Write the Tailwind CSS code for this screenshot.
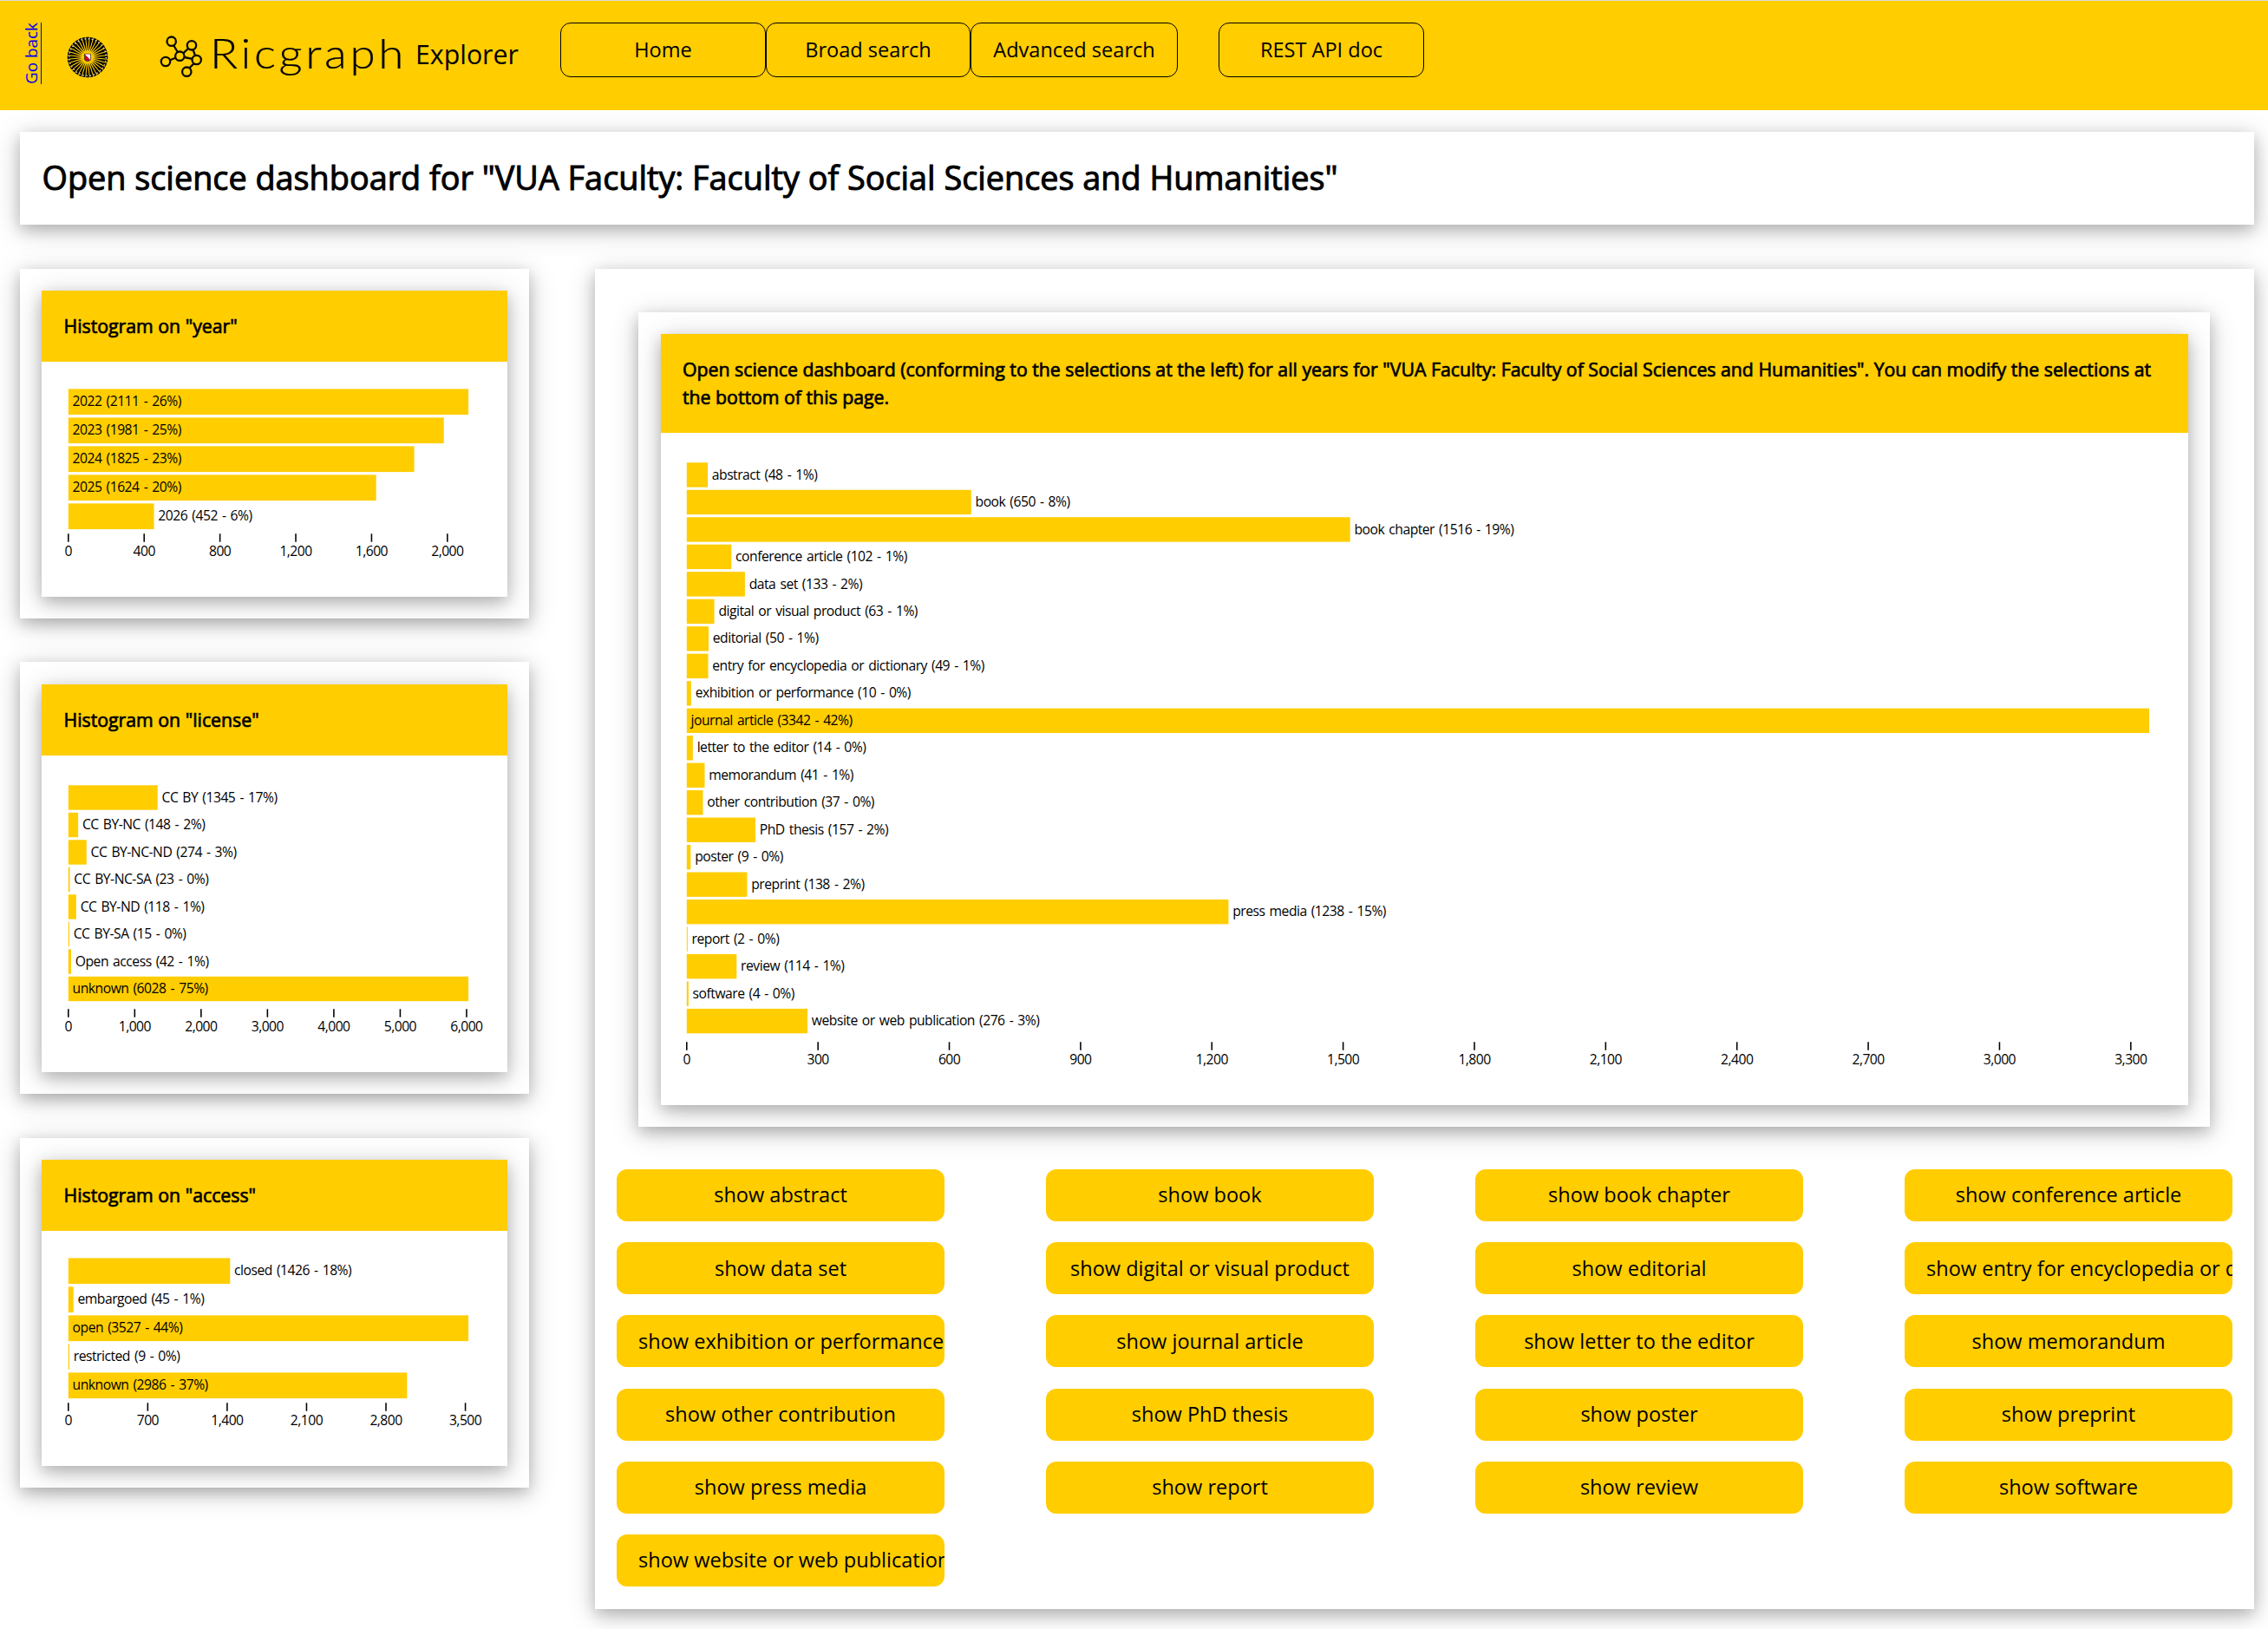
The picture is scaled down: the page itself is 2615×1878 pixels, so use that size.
<!DOCTYPE html>
<html lang="en">
<head>
  <meta charset="UTF-8" />
  <meta name="viewport" content="width=device-width, initial-scale=1.0" />
  <title>Ricgraph Explorer</title>
  <script src="https://cdn.jsdelivr.net/npm/@tailwindcss/browser@4"></script>
</head>
<body class="h-screen overflow-hidden bg-white text-black font-['Open_Sans',sans-serif] text-[23.55px] leading-[35px]">
  <!-- Header -->
  <header class="flex items-start h-[127px] border-t border-[#dcdcdc] bg-[#ffcd00]">
    <a href="#" class="[writing-mode:vertical-rl] rotate-180 ml-[22px] mt-[25px] w-[28px] text-[18.9px] leading-[28px] text-[#0000ee] underline underline-offset-1 decoration-1">Go back</a>
    <svg id="sun" class="ml-[27px] mt-[41px] w-[48px] h-[48px] shrink-0" viewBox="-24 -24 48 48">
      <g id="rays"></g>
      <circle r="21.3" fill="none" stroke="#e0e0e0" stroke-width="1.5" stroke-dasharray="1.4 2.78" />
      <path d="M-3.6-3.8h7.2v6.4q0 1.4-3.6 2q-3.6-.6-3.6-2z" fill="#c00a35" stroke="#4a3a20" stroke-width=".9" />
      <path d="M-3.2-3.4h6.4v6.400z" fill="#fff" />
    </svg>
    <svg class="ml-[59px] mt-[40px] w-[50px] h-[50px] shrink-0" viewBox="184 41 50 50" fill="none" stroke="#0a0a00" stroke-width="2.3">
      <path d="M200.300 52.500L204.800 60M211.500 61.200L217 56M202.300 66.800L196 69.200M212.600 66L221.500 67.800M222.600 57.300L225 64M223.400 73.400L218.500 78.300" />
      <circle cx="197.700" cy="47.700" r="5.200" />
      <circle cx="221" cy="52.300" r="5.200" />
      <circle cx="207.300" cy="64.700" r="5.200" />
      <circle cx="191" cy="71" r="5.200" />
      <circle cx="226.700" cy="69" r="5.200" />
      <circle cx="215.300" cy="82.700" r="5.200" />
    </svg>
    <span class="ml-[8px] mt-[30px] w-[237px] whitespace-nowrap font-['Lato'] font-light text-[46.5px] leading-[60px] tracking-[3.2px] origin-left scale-x-[1.14] [-webkit-text-stroke:0.2px_black]">Ricgraph</span>
    <span class="w-[167px] mt-[39px] text-[30.3px] leading-[45px]">Explorer</span>
    <nav class="flex mt-[25px] text-center">
      <a class="w-[237px] h-[63px] pt-[13px] border border-black rounded-[12px]">Home</a>
      <a class="w-[236px] h-[63px] pt-[13px] border border-black rounded-[12px]">Broad search</a>
      <a class="w-[239px] h-[63px] pt-[13px] border border-black rounded-[12px]">Advanced search</a>
      <a class="ml-[47px] w-[237px] h-[63px] pt-[13px] border border-black rounded-[12px]">REST API doc</a>
    </nav>
  </header>

  <main class="pl-[23px] pr-[16px] pt-[25px]">
    <div class="h-[107px] pl-[25.5px] pt-[25px] bg-white shadow-[0_6px_16px_rgba(0,0,0,0.2),0_6px_31px_rgba(0,0,0,0.19)]">
      <h1 class="text-[37.8px] leading-[56px] [-webkit-text-stroke:1px_black]">Open science dashboard for "VUA Faculty: Faculty of Social Sciences and Humanities"</h1>
    </div>

    <div class="flex mt-[51px] gap-[76px]">
      <!-- Histograms -->
      <div class="flex flex-col w-[587px] shrink-0">
        <section class="h-[403px] p-[25px] bg-white shadow-[0_6px_16px_rgba(0,0,0,0.2),0_6px_31px_rgba(0,0,0,0.19)]">
          <div class="h-[353px] bg-white shadow-[0_6px_16px_rgba(0,0,0,0.2),0_6px_31px_rgba(0,0,0,0.19)]">
            <h2 class="h-[82px] px-[25.5px] pt-[25px] bg-[#ffcd00] text-[21.27px] leading-[32px] [-webkit-text-stroke:0.7px_black]">Histogram on "year"</h2>
            <svg id="year" class="w-full h-[271px]"></svg>
          </div>
        </section>
        <section class="h-[498px] mt-[50px] p-[25px] pt-[26px] bg-white shadow-[0_6px_16px_rgba(0,0,0,0.2),0_6px_31px_rgba(0,0,0,0.19)]">
          <div class="h-[447px] bg-white shadow-[0_6px_16px_rgba(0,0,0,0.2),0_6px_31px_rgba(0,0,0,0.19)]">
            <h2 class="h-[82px] px-[25.5px] pt-[25px] bg-[#ffcd00] text-[21.27px] leading-[32px] [-webkit-text-stroke:0.7px_black]">Histogram on "license"</h2>
            <svg id="license" class="w-full h-[365px]"></svg>
          </div>
        </section>
        <section class="h-[403px] mt-[51px] p-[25px] bg-white shadow-[0_6px_16px_rgba(0,0,0,0.2),0_6px_31px_rgba(0,0,0,0.19)]">
          <div class="h-[353px] bg-white shadow-[0_6px_16px_rgba(0,0,0,0.2),0_6px_31px_rgba(0,0,0,0.19)]">
            <h2 class="h-[82px] px-[25.5px] pt-[25px] bg-[#ffcd00] text-[21.27px] leading-[32px] [-webkit-text-stroke:0.7px_black]">Histogram on "access"</h2>
            <svg id="access" class="w-full h-[271px]"></svg>
          </div>
        </section>
      </div>

      <!-- Dashboard -->
      <div class="flex-1 h-[1545px] pt-[50px] px-[25px] bg-white shadow-[0_6px_16px_rgba(0,0,0,0.2),0_6px_31px_rgba(0,0,0,0.19)]">
        <section class="h-[939px] ml-[25px] mr-[26px] p-[25px] pl-[26px] bg-white shadow-[0_6px_16px_rgba(0,0,0,0.2),0_6px_31px_rgba(0,0,0,0.19)]">
          <div class="h-[889px] bg-white shadow-[0_6px_16px_rgba(0,0,0,0.2),0_6px_31px_rgba(0,0,0,0.19)]">
            <h2 class="h-[114px] px-[25px] pt-[25px] bg-[#ffcd00] text-[21.27px] leading-[32px] [-webkit-text-stroke:0.7px_black]">Open science dashboard (conforming to the selections at the left) for all years for "VUA Faculty: Faculty of Social Sciences and Humanities". You can modify the selections at the bottom of this page.</h2>
            <svg id="category" class="w-full h-[775px]"></svg>
          </div>
        </section>
        <div id="buttons" class="grid grid-cols-[repeat(4,378px)] justify-between gap-y-[24.2px] mt-[49px]"></div>
      </div>
    </div>
  </main>

  <script>
    const NS = 'http://www.w3.org/2000/svg';

    function add(parent, tag, attrs, text) {
      const el = document.createElementNS(NS, tag);
      for (const k in attrs) el.setAttribute(k, attrs[k]);
      if (text !== undefined) el.textContent = text;
      parent.appendChild(el);
    }

    // Horizontal bar chart, label goes inside the bar when the bar is long enough
    function barChart(id, o) {
      const svg = document.getElementById(id);
      const max = Math.max(...o.data.map(d => d[1]));
      const x = v => o.x0 + v / max * o.width;
      o.data.forEach(([name, count, pct], i) => {
        const y = o.top + i * o.step;
        add(svg, 'rect', { x: o.x0, y: y, width: x(count) - o.x0, height: o.bar, class: 'fill-[#ffcd00]' });
        const inside = count > max * 0.48;
        add(svg, 'text', { x: (inside ? o.x0 : x(count)) + 4.8, y: y + o.bar / 2 + 5.1, class: "font-['Open_Sans'] text-[15.7px] tracking-[-0.5px] [word-spacing:1.5px]" }, `${name} (${count} - ${pct}%)`);
      });
      for (let t = 0; t <= max; t += o.tick) {
        add(svg, 'line', { x1: x(t), x2: x(t), y1: o.axis, y2: o.axis + 9.4, class: 'stroke-black stroke-[1.56px]' });
        add(svg, 'text', { x: x(t), y: o.axis + 25.3, 'text-anchor': 'middle', class: "font-['Open_Sans'] text-[15.7px] tracking-[-0.55px]" }, t.toLocaleString('en-US'));
      }
    }

    barChart('year', {
      x0: 30.8, width: 461.3, top: 31.4, step: 33, bar: 29.7, axis: 198.3, tick: 400,
      data: [['2022', 2111, 26], ['2023', 1981, 25], ['2024', 1825, 23], ['2025', 1624, 20], ['2026', 452, 6]]
    });
    barChart('license', {
      x0: 30.8, width: 461.3, top: 34.3, step: 31.5, bar: 28.4, axis: 292.3, tick: 1000,
      data: [['CC BY', 1345, 17], ['CC BY-NC', 148, 2], ['CC BY-NC-ND', 274, 3], ['CC BY-NC-SA', 23, 0],
        ['CC BY-ND', 118, 1], ['CC BY-SA', 15, 0], ['Open access', 42, 1], ['unknown', 6028, 75]]
    });
    barChart('access', {
      x0: 30.8, width: 461.3, top: 31.4, step: 33, bar: 29.7, axis: 198.3, tick: 700,
      data: [['closed', 1426, 18], ['embargoed', 45, 1], ['open', 3527, 44], ['restricted', 9, 0], ['unknown', 2986, 37]]
    });

    const categories = [
      ['abstract', 48, 1], ['book', 650, 8], ['book chapter', 1516, 19], ['conference article', 102, 1],
      ['data set', 133, 2], ['digital or visual product', 63, 1], ['editorial', 50, 1],
      ['entry for encyclopedia or dictionary', 49, 1], ['exhibition or performance', 10, 0],
      ['journal article', 3342, 42], ['letter to the editor', 14, 0], ['memorandum', 41, 1],
      ['other contribution', 37, 0], ['PhD thesis', 157, 2], ['poster', 9, 0], ['preprint', 138, 2],
      ['press media', 1238, 15], ['report', 2, 0], ['review', 114, 1], ['software', 4, 0],
      ['website or web publication', 276, 3]
    ];
    barChart('category', { x0: 29.8, width: 1686.2, top: 34.3, step: 31.48, bar: 28.4, axis: 702.3, tick: 300, data: categories });

    // Buttons below the chart
    document.getElementById('buttons').innerHTML = categories.map(c =>
      `<div class="flex h-[60px] px-[25px] pt-[12.4px] rounded-[12px] bg-[#ffcd00] overflow-hidden whitespace-nowrap"><span class="m-auto mt-0">show ${c[0]}</span></div>`
    ).join('');

    // Sun rays of the logo
    for (let i = 0; i < 32; i++) {
      add(document.getElementById('rays'), 'path', { d: 'M0-6.500L1.450-20L1.900-23.200H-1.900L-1.450-20z', transform: `rotate(${i * 11.25})` });
    }
  </script>
</body>
</html>
